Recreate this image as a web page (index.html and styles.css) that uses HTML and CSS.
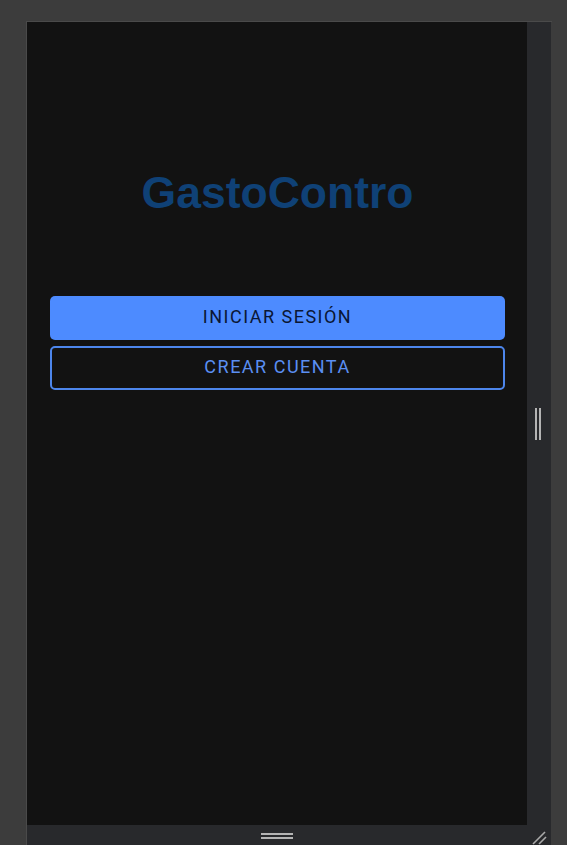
FILE: index.html
```html
<!DOCTYPE html>
<html lang="es">
<head>
<meta charset="utf-8">
<title>GastoContro</title>
<link rel="stylesheet" href="styles.css">
</head>
<body>
  <div class="frame">
    <main class="screen">
      <h1 class="title">GastoContro</h1>
      <div class="actions">
        <button class="btn btn-primary" type="button">INICIAR SESIÓN</button>
        <button class="btn btn-outline" type="button">CREAR CUENTA</button>
      </div>
    </main>
    <div class="rail-right">
      <span class="grip-v"></span>
    </div>
    <div class="rail-bottom">
      <span class="grip-h"></span>
    </div>
    <div class="corner">
      <svg width="16" height="16" viewBox="0 0 16 16" aria-hidden="true">
        <line x1="2" y1="15" x2="14" y2="3" stroke="#a9a9a9" stroke-width="1.6"/>
        <line x1="8" y1="15" x2="15" y2="8" stroke="#a9a9a9" stroke-width="1.6"/>
      </svg>
    </div>
  </div>
</body>
</html>
```

FILE: styles.css
```css
html, body {
  margin: 0;
  padding: 0;
  height: 100%;
  overflow: hidden;
}

body {
  background: #3c3c3c;
  font-family: "Liberation Sans", Arial, sans-serif;
}

.frame {
  margin: 21px 0 0 26px;
  width: 525px;
  border-top: 1px solid #4a4a4a;
  border-left: 1px solid #4a4a4a;
  display: grid;
  grid-template-columns: 500px 24px;
  grid-template-rows: 803px 20px;
}

.screen {
  background: #121212;
  display: flex;
  flex-direction: column;
  padding: 149px 22px 0 23px;
  box-sizing: border-box;
}

.title {
  margin: 0;
  font-family: "Liberation Sans", Arial, sans-serif;
  font-weight: 700;
  font-size: 44.5px;
  line-height: 44px;
  color: #0f4176;
  text-align: center;
}

.actions {
  margin-top: 81px;
  display: flex;
  flex-direction: column;
  gap: 6px;
}

.btn {
  height: 44px;
  border-radius: 5px;
  font-family: Roboto, "Liberation Sans", sans-serif;
  font-size: 18px;
  font-weight: 400;
  letter-spacing: 1.5px;
  cursor: pointer;
  padding: 0 0 3px 0;
}

.btn-primary {
  background: #4d8bff;
  border: none;
  color: #0a1634;
}

.btn-outline {
  background: transparent;
  border: 2px solid #4d86ec;
  color: #5b8ff2;
}

.rail-right {
  background: #28292c;
  display: flex;
  align-items: center;
  justify-content: center;
}

.grip-v {
  width: 2px;
  height: 32px;
  border-left: 2px solid #b4b4b4;
  border-right: 2px solid #b4b4b4;
  margin-left: -2px;
}

.rail-bottom {
  background: #28292c;
  display: flex;
  justify-content: center;
  padding-top: 8px;
  box-sizing: border-box;
}

.grip-h {
  width: 32px;
  height: 2px;
  border-top: 2px solid #b4b4b4;
  border-bottom: 2px solid #b4b4b4;
}

.corner {
  background: #28292c;
  display: flex;
  align-items: flex-end;
  justify-content: flex-end;
  padding: 0 4px 0 0;
}
```
